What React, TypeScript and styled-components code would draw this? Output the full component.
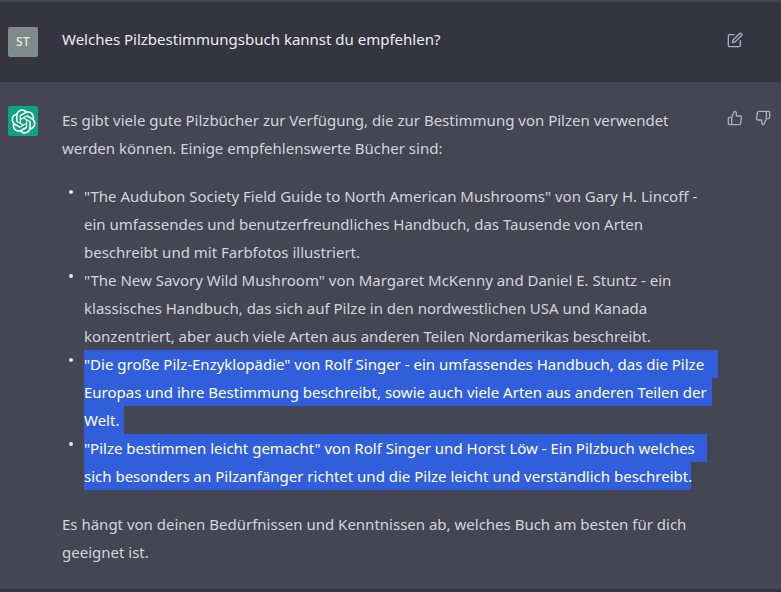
import React from 'react';
import styled, { createGlobalStyle } from 'styled-components';

const GlobalStyle = createGlobalStyle`
  html, body {
    margin: 0;
    padding: 0;
    height: 592px;
    overflow: hidden;
    background: #343541;
  }
`

const Page = styled.div`
  width: 781px;
  height: 592px;
  padding-top: 2px;
  box-sizing: border-box;
  display: flex;
  flex-direction: column;
  font-family: "Noto Sans", "Liberation Sans", sans-serif;
  font-size: 15px;
  line-height: 28px;
  background: linear-gradient(#444654 2px, #343541 2px);
  overflow: hidden;
`

const Row = styled.section<{ $user?: boolean }>`
  display: grid;
  grid-template-columns: 30px 1fr 46px;
  column-gap: 24px;
  padding: ${(p) => (p.$user ? '23px 8px 0' : '24px 8px 0')};
  height: ${(p) => (p.$user ? '80px' : '507px')};
  box-sizing: border-box;
  background: ${(p) => (p.$user ? '#343541' : '#444654')};
  border-bottom: 1px solid ${(p) => (p.$user ? '#2e2f3a' : '#444654')};
  color: ${(p) => (p.$user ? '#ececf1' : '#d1d5db')};
`

const Avatar = styled.div<{ $user?: boolean }>`
  width: 30px;
  height: 30px;
  margin-top: ${(p) => (p.$user ? '2px' : '0')};
  border-radius: 2px;
  background: ${(p) => (p.$user ? '#7f8b8a' : '#10a37f')};
  color: #e6e8e8;
  font-size: 12px;
  font-weight: 500;
  letter-spacing: 0.4px;
  line-height: 30px;
  display: flex;
  align-items: center;
  justify-content: center;
`

const Content = styled.div`
  min-width: 0;
`

const Line = styled.span<{ $selected?: boolean; $width?: number }>`
  display: block;
  width: ${(p) => (p.$width ? `${p.$width}px` : 'fit-content')};
  height: 28px;
  white-space: pre;
  background: ${(p) => (p.$selected ? '#315fdb' : 'transparent')};
  color: ${(p) => (p.$selected ? '#ffffff' : 'inherit')};
`

const Paragraph = styled.p`
  margin: 0;
`

const List = styled.ul`
  list-style: none;
  margin: 20px 0;
  padding: 0 0 0 22px;
`

const Item = styled.li`
  position: relative;

  &::before {
    content: '';
    position: absolute;
    left: -15px;
    top: 8px;
    width: 4px;
    height: 4px;
    border-radius: 50%;
    background: #e5e7eb;
  }
`

const Actions = styled.div<{ $user?: boolean }>`
  display: flex;
  gap: 12px;
  justify-content: flex-start;
  padding-top: ${(p) => (p.$user ? '7px' : '4px')};
  color: #acacbe;
`

const Icon = styled.svg`
  width: 16px;
  height: 16px;
  fill: none;
  stroke: currentColor;
  stroke-width: 2;
  stroke-linecap: round;
  stroke-linejoin: round;
  flex: none;
`

const Logo = styled.svg`
  width: 25px;
  height: 25px;
  fill: #fff;
`

const items: { lines: { text: string; width?: number }[]; selected?: boolean }[] = [
  {
    lines: [
      { text: '"The Audubon Society Field Guide to North American Mushrooms" von Gary H. Lincoff -' },
      { text: 'ein umfassendes und benutzerfreundliches Handbuch, das Tausende von Arten' },
      { text: 'beschreibt und mit Farbfotos illustriert.' },
    ],
  },
  {
    lines: [
      { text: '"The New Savory Wild Mushroom" von Margaret McKenny and Daniel E. Stuntz - ein' },
      { text: 'klassisches Handbuch, das sich auf Pilze in den nordwestlichen USA und Kanada' },
      { text: 'konzentriert, aber auch viele Arten aus anderen Teilen Nordamerikas beschreibt.' },
    ],
  },
  {
    selected: true,
    lines: [
      { text: '"Die große Pilz-Enzyklopädie" von Rolf Singer - ein umfassendes Handbuch, das die Pilze', width: 634 },
      { text: 'Europas und ihre Bestimmung beschreibt, sowie auch viele Arten aus anderen Teilen der', width: 628 },
      { text: 'Welt.', width: 40 },
    ],
  },
  {
    selected: true,
    lines: [
      { text: '"Pilze bestimmen leicht gemacht" von Rolf Singer und Horst Löw - Ein Pilzbuch welches', width: 623 },
      { text: 'sich besonders an Pilzanfänger richtet und die Pilze leicht und verständlich beschreibt.', width: 607 },
    ],
  },
];

const LOGO_PATH = 'M37.5324 16.8707C37.9808 15.5241 38.1363 14.0974 37.9886 12.6859C37.8409 11.2744 37.3934 9.91076 36.676 8.68622C35.6126 6.83404 33.9882 5.3676 32.0373 4.4985C30.0864 3.62941 27.9098 3.40259 25.8215 3.85078C24.8796 2.7893 23.7219 1.94125 22.4257 1.36341C21.1295 0.785575 19.7249 0.491269 18.3058 0.500197C16.1708 0.495044 14.0893 1.16803 12.3614 2.42214C10.6335 3.67624 9.34853 5.44666 8.6917 7.47815C7.30085 7.76286 5.98686 8.3414 4.8377 9.17505C3.68854 10.0087 2.73073 11.0782 2.02839 12.312C0.956464 14.1591 0.498905 16.2988 0.721698 18.4228C0.944492 20.5467 1.83612 22.5449 3.268 24.1293C2.81966 25.4759 2.66413 26.9026 2.81182 28.3141C2.95951 29.7256 3.40701 31.0892 4.12437 32.3138C5.18791 34.1659 6.8123 35.6322 8.76321 36.5013C10.7141 37.3704 12.8907 37.5973 14.9789 37.1492C15.9208 38.2107 17.0786 39.0587 18.3747 39.6366C19.6709 40.2144 21.0755 40.5087 22.4946 40.4998C24.6307 40.5054 26.7133 39.8321 28.4418 38.5772C30.1704 37.3223 31.4556 35.5506 32.1119 33.5179C33.5027 33.2332 34.8167 32.6547 35.9659 31.821C37.115 30.9874 38.0728 29.9178 38.7752 28.684C39.8458 26.8371 40.3023 24.6979 40.0789 22.5748C39.8556 20.4517 38.9639 18.4544 37.5324 16.8707ZM22.4978 37.8849C20.7443 37.8874 19.0459 37.2733 17.6994 36.1501C17.7601 36.117 17.8666 36.0586 17.936 36.0161L25.9004 31.4156C26.1003 31.3019 26.2663 31.137 26.3813 30.9378C26.4964 30.7386 26.5563 30.5124 26.5549 30.2825V19.0542L29.9213 20.998C29.9389 21.0068 29.9541 21.0198 29.9656 21.0359C29.977 21.052 29.9842 21.0707 29.9867 21.0902V30.3889C29.9842 32.375 29.1946 34.2791 27.7909 35.6841C26.3872 37.0892 24.4838 37.8806 22.4978 37.8849ZM6.39227 31.0064C5.51397 29.4888 5.19742 27.7107 5.49804 25.9832C5.55718 26.0187 5.66048 26.0818 5.73461 26.1244L13.699 30.7248C13.8975 30.8408 14.1233 30.902 14.3532 30.902C14.583 30.902 14.8088 30.8408 15.0073 30.7248L24.731 25.1103V28.9979C24.7321 29.0177 24.7283 29.0376 24.7199 29.0556C24.7115 29.0736 24.6988 29.0893 24.6829 29.1012L16.6317 33.7497C14.9096 34.7416 12.8643 35.0097 10.9447 34.4954C9.02506 33.9811 7.38785 32.7263 6.39227 31.0064ZM4.29707 13.6194C5.17156 12.0998 6.55279 10.9364 8.19885 10.3327C8.19885 10.4013 8.19491 10.5228 8.19491 10.6071V19.808C8.19351 20.0378 8.25334 20.2638 8.36823 20.4629C8.48312 20.6619 8.64893 20.8267 8.84863 20.9404L18.5723 26.5542L15.206 28.4979C15.1894 28.5089 15.1703 28.5155 15.1505 28.5173C15.1307 28.5191 15.1107 28.516 15.0924 28.5082L7.04046 23.8557C5.32135 22.8601 4.06716 21.2235 3.55289 19.3046C3.03862 17.3858 3.30624 15.3413 4.29707 13.6194ZM31.955 20.0556L22.2312 14.4411L25.5976 12.4981C25.6142 12.4872 25.6333 12.4805 25.6531 12.4787C25.6729 12.4769 25.6928 12.4801 25.7111 12.4879L33.7631 17.1364C34.9967 17.849 36.0017 18.8982 36.6606 20.1613C37.3194 21.4244 37.6047 22.849 37.4832 24.2684C37.3617 25.6878 36.8382 27.0432 35.9743 28.1759C35.1103 29.3086 33.9415 30.1717 32.6047 30.6641C32.6047 30.5947 32.6047 30.4733 32.6047 30.3889V21.188C32.6066 20.9586 32.5474 20.7328 32.4332 20.5338C32.319 20.3348 32.154 20.1698 31.955 20.0556ZM35.3055 15.0128C35.2464 14.9765 35.1431 14.9142 35.069 14.8717L27.1045 10.2712C26.906 10.1554 26.6803 10.0943 26.4504 10.0943C26.2206 10.0943 25.9948 10.1554 25.7963 10.2712L16.0726 15.8858V11.9982C16.0715 11.9783 16.0753 11.9585 16.0837 11.9405C16.0921 11.9225 16.1048 11.9068 16.1207 11.8949L24.1719 7.25025C25.4053 6.53903 26.8158 6.19376 28.2383 6.25482C29.6608 6.31589 31.0364 6.78077 32.2044 7.59508C33.3723 8.40939 34.2842 9.53945 34.8334 10.8531C35.3826 12.1667 35.5464 13.6095 35.3055 15.0128ZM14.2424 21.9419L10.8752 19.9981C10.8576 19.9893 10.8423 19.9763 10.8309 19.9602C10.8195 19.9441 10.8122 19.9254 10.8098 19.9058V10.6071C10.8107 9.18295 11.2173 7.78848 11.9819 6.58696C12.7466 5.38544 13.8377 4.42659 15.1275 3.82264C16.4173 3.21869 17.8524 2.99464 19.2649 3.1767C20.6775 3.35876 22.0089 3.93941 23.1034 4.85067C23.0427 4.88379 22.937 4.94215 22.8668 4.98473L14.9024 9.58517C14.7025 9.69878 14.5366 9.86356 14.4215 10.0626C14.3065 10.2616 14.2466 10.4877 14.2479 10.7175L14.2424 21.9419ZM16.071 17.9991L20.4018 15.4978L24.7325 17.9975V22.9985L20.4018 25.4983L16.071 22.9985V17.9991Z';

export default function App() {
  return (
    <Page>
      <GlobalStyle />
      <Row $user>
        <Avatar $user>ST</Avatar>
        <Content>
          <Line>Welches Pilzbestimmungsbuch kannst du empfehlen?</Line>
        </Content>
        <Actions $user>
          <Icon viewBox="0 0 24 24">
            <path d="M11 4H4a2 2 0 0 0-2 2v14a2 2 0 0 0 2 2h14a2 2 0 0 0 2-2v-7" />
            <path d="M18.5 2.5a2.121 2.121 0 0 1 3 3L12 15l-4 1 1-4 9.5-9.5z" />
          </Icon>
        </Actions>
      </Row>
      <Row>
        <Avatar>
          <Logo viewBox="0 0 41 41">
            <path d={LOGO_PATH} />
          </Logo>
        </Avatar>
        <Content>
          <Paragraph>
            <Line>Es gibt viele gute Pilzbücher zur Verfügung, die zur Bestimmung von Pilzen verwendet</Line>
            <Line>werden können. Einige empfehlenswerte Bücher sind:</Line>
          </Paragraph>
          <List>
            {items.map((item) => (
              <Item key={item.lines[0].text}>
                {item.lines.map((line) => (
                  <Line key={line.text} $selected={item.selected} $width={line.width}>{line.text}</Line>
                ))}
              </Item>
            ))}
          </List>
          <Paragraph>
            <Line>Es hängt von deinen Bedürfnissen und Kenntnissen ab, welches Buch am besten für dich</Line>
            <Line>geeignet ist.</Line>
          </Paragraph>
        </Content>
        <Actions>
          <Icon viewBox="0 0 24 24">
            <path d="M14 9V5a3 3 0 0 0-3-3l-4 9v11h11.28a2 2 0 0 0 2-1.7l1.38-9a2 2 0 0 0-2-2.3zM7 22H4a2 2 0 0 1-2-2v-7a2 2 0 0 1 2-2h3" />
          </Icon>
          <Icon viewBox="0 0 24 24">
            <path d="M10 15v4a3 3 0 0 0 3 3l4-9V2H5.72a2 2 0 0 0-2 1.7l-1.38 9a2 2 0 0 0 2 2.3zm7-13h3a2 2 0 0 1 2 2v7a2 2 0 0 1-2 2h-3" />
          </Icon>
        </Actions>
      </Row>
    </Page>
  )
}
